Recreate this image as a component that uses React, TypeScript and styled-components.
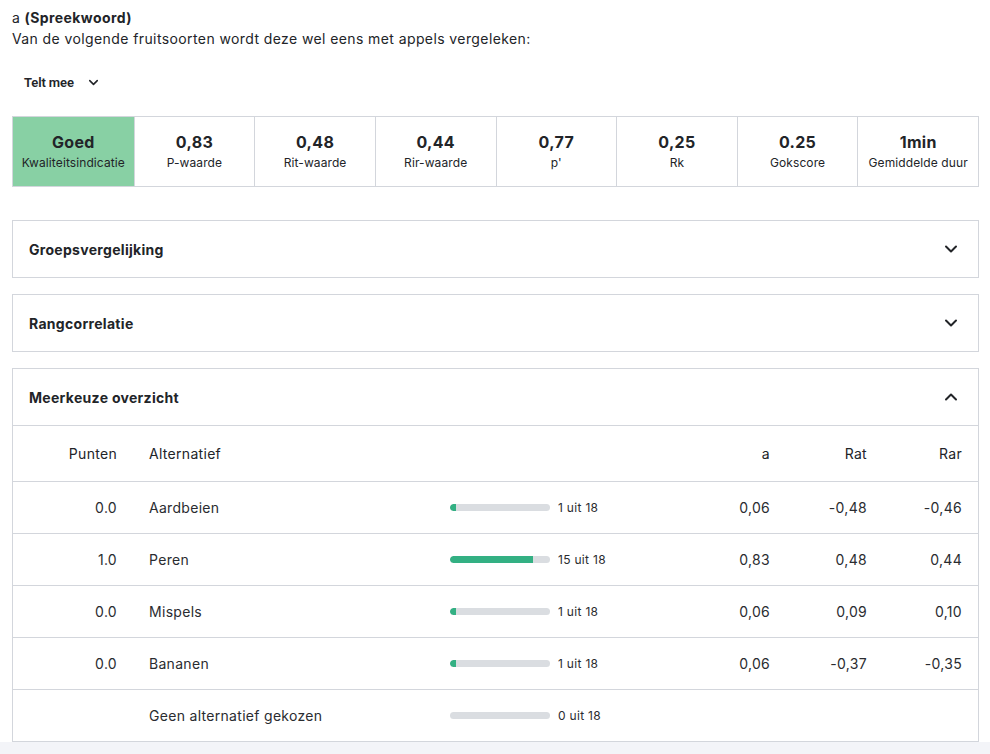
import React from 'react';
import styled, { createGlobalStyle } from 'styled-components';
import { ChevronDown, ChevronUp } from 'lucide-react';

const GlobalStyle = createGlobalStyle`
  html, body {
    margin: 0;
    padding: 0;
    background: #f3f4f8;
  }
  body {
    font-family: Inter, "Noto Sans", "Liberation Sans", sans-serif;
    letter-spacing: 0.3px;
    color: #222428;
  }
  * { box-sizing: border-box; }
`;

const Page = styled.div`
  background: #ffffff;
  padding: 7px 11px 0 12px;
`;

const Question = styled.div`
  font-size: 14px;
  line-height: 21px;
  letter-spacing: 0.4px;
`;

const Bold = styled.strong`
  font-weight: 700;
`;

const Toggle = styled.button`
  display: flex;
  align-items: center;
  gap: 12px;
  height: 32px;
  margin-top: 17px;
  padding: 0 12px;
  border: none;
  background: transparent;
  font-family: Roboto, "Liberation Sans", sans-serif;
  font-size: 13px;
  font-weight: 600;
  letter-spacing: -0.1px;
  color: #222428;
  cursor: pointer;
`;

const Stats = styled.div`
  display: grid;
  grid-template-columns: repeat(8, 1fr);
  margin-top: 18px;
  border: 1px solid #d3d6dc;
  height: 71px;
`;

const StatCell = styled.div<{ $highlight?: boolean }>`
  display: flex;
  flex-direction: column;
  align-items: center;
  justify-content: center;
  gap: 3px;
  background: ${({ $highlight }) => ($highlight ? '#88d0a4' : '#ffffff')};
  & + & {
    border-left: 1px solid #d3d6dc;
  }
`;

const StatValue = styled.div`
  font-size: 16px;
  font-weight: 700;
  line-height: 20px;
`;

const StatLabel = styled.div`
  font-size: 12px;
  line-height: 16px;
  letter-spacing: 0.1px;
  white-space: nowrap;
`;

const Panels = styled.div`
  display: flex;
  flex-direction: column;
  gap: 16px;
  margin-top: 33px;
`;

const Panel = styled.section`
  border: 1px solid #d3d6dc;
  background: #ffffff;
`;

const PanelHeader = styled.div`
  display: flex;
  align-items: center;
  justify-content: space-between;
  height: 56px;
  padding: 0 17px 0 16px;
  font-size: 14px;
  font-weight: 700;
  color: #222428;
`;

const Table = styled.div`
  display: grid;
  grid-template-columns: 120px 301px 1fr 116px 97px 95px;
`;

const HeadCell = styled.div<{ $align?: 'left' | 'right' }>`
  height: 56px;
  display: flex;
  align-items: center;
  justify-content: ${({ $align }) => ($align === 'right' ? 'flex-end' : 'flex-start')};
  padding: 0 16px;
  border-top: 1px solid #d3d6dc;
  font-size: 14px;
`;

const Cell = styled.div<{ $align?: 'left' | 'right' }>`
  height: 52px;
  display: flex;
  align-items: center;
  justify-content: ${({ $align }) => ($align === 'right' ? 'flex-end' : 'flex-start')};
  padding: 0 16px;
  border-top: 1px solid #d3d6dc;
  font-size: 14px;
  color: #2a2c30;
`;

const BarWrap = styled.div`
  display: flex;
  align-items: center;
  gap: 8px;
`;

const Track = styled.div`
  width: 100px;
  height: 7px;
  border-radius: 4px;
  background: #dadde1;
  overflow: hidden;
`;

const Fill = styled.div`
  height: 100%;
  background: #33b083;
  border-radius: 4px 0 0 4px;
`;

const Count = styled.span`
  font-size: 12px;
  color: #2a2c30;
`;

const stats = [
  { value: 'Goed', label: 'Kwaliteitsindicatie', highlight: true },
  { value: '0,83', label: 'P-waarde' },
  { value: '0,48', label: 'Rit-waarde' },
  { value: '0,44', label: 'Rir-waarde' },
  { value: '0,77', label: "p'" },
  { value: '0,25', label: 'Rk' },
  { value: '0.25', label: 'Gokscore' },
  { value: '1min', label: 'Gemiddelde duur' },
];

const rows = [
  { points: '0.0', name: 'Aardbeien', count: 1, a: '0,06', rat: '-0,48', rar: '-0,46' },
  { points: '1.0', name: 'Peren', count: 15, a: '0,83', rat: '0,48', rar: '0,44' },
  { points: '0.0', name: 'Mispels', count: 1, a: '0,06', rat: '0,09', rar: '0,10' },
  { points: '0.0', name: 'Bananen', count: 1, a: '0,06', rat: '-0,37', rar: '-0,35' },
  { points: '', name: 'Geen alternatief gekozen', count: 0, a: '', rat: '', rar: '' },
];

const total = 18;

export default function App() {
  return (
    <>
      <GlobalStyle />
      <Page>
        <Question>
          a <Bold>(Spreekwoord)</Bold>
          <br />
          Van de volgende fruitsoorten wordt deze wel eens met appels vergeleken:
        </Question>

        <Toggle>
          Telt mee
          <ChevronDown size={15} strokeWidth={2.5} />
        </Toggle>

        <Stats>
          {stats.map((s) => (
            <StatCell key={s.label} $highlight={s.highlight}>
              <StatValue>{s.value}</StatValue>
              <StatLabel>{s.label}</StatLabel>
            </StatCell>
          ))}
        </Stats>

        <Panels>
          <Panel>
            <PanelHeader>
              Groepsvergelijking
              <ChevronDown size={20} strokeWidth={2.4} />
            </PanelHeader>
          </Panel>
          <Panel>
            <PanelHeader>
              Rangcorrelatie
              <ChevronDown size={20} strokeWidth={2.4} />
            </PanelHeader>
          </Panel>
          <Panel>
            <PanelHeader>
              Meerkeuze overzicht
              <ChevronUp size={20} strokeWidth={2.4} />
            </PanelHeader>
            <Table>
              <HeadCell $align="right">Punten</HeadCell>
              <HeadCell>Alternatief</HeadCell>
              <HeadCell />
              <HeadCell $align="right">a</HeadCell>
              <HeadCell $align="right">Rat</HeadCell>
              <HeadCell $align="right">Rar</HeadCell>
              {rows.map((r) => (
                <React.Fragment key={r.name}>
                  <Cell $align="right">{r.points}</Cell>
                  <Cell>{r.name}</Cell>
                  <Cell>
                    <BarWrap>
                      <Track>
                        {r.count > 0 && <Fill style={{ width: `${Math.max((r.count / total) * 100, 6)}%` }} />}
                      </Track>
                      <Count>
                        {r.count} uit {total}
                      </Count>
                    </BarWrap>
                  </Cell>
                  <Cell $align="right">{r.a}</Cell>
                  <Cell $align="right">{r.rat}</Cell>
                  <Cell $align="right">{r.rar}</Cell>
                </React.Fragment>
              ))}
            </Table>
          </Panel>
        </Panels>
      </Page>
    </>
  );
}
